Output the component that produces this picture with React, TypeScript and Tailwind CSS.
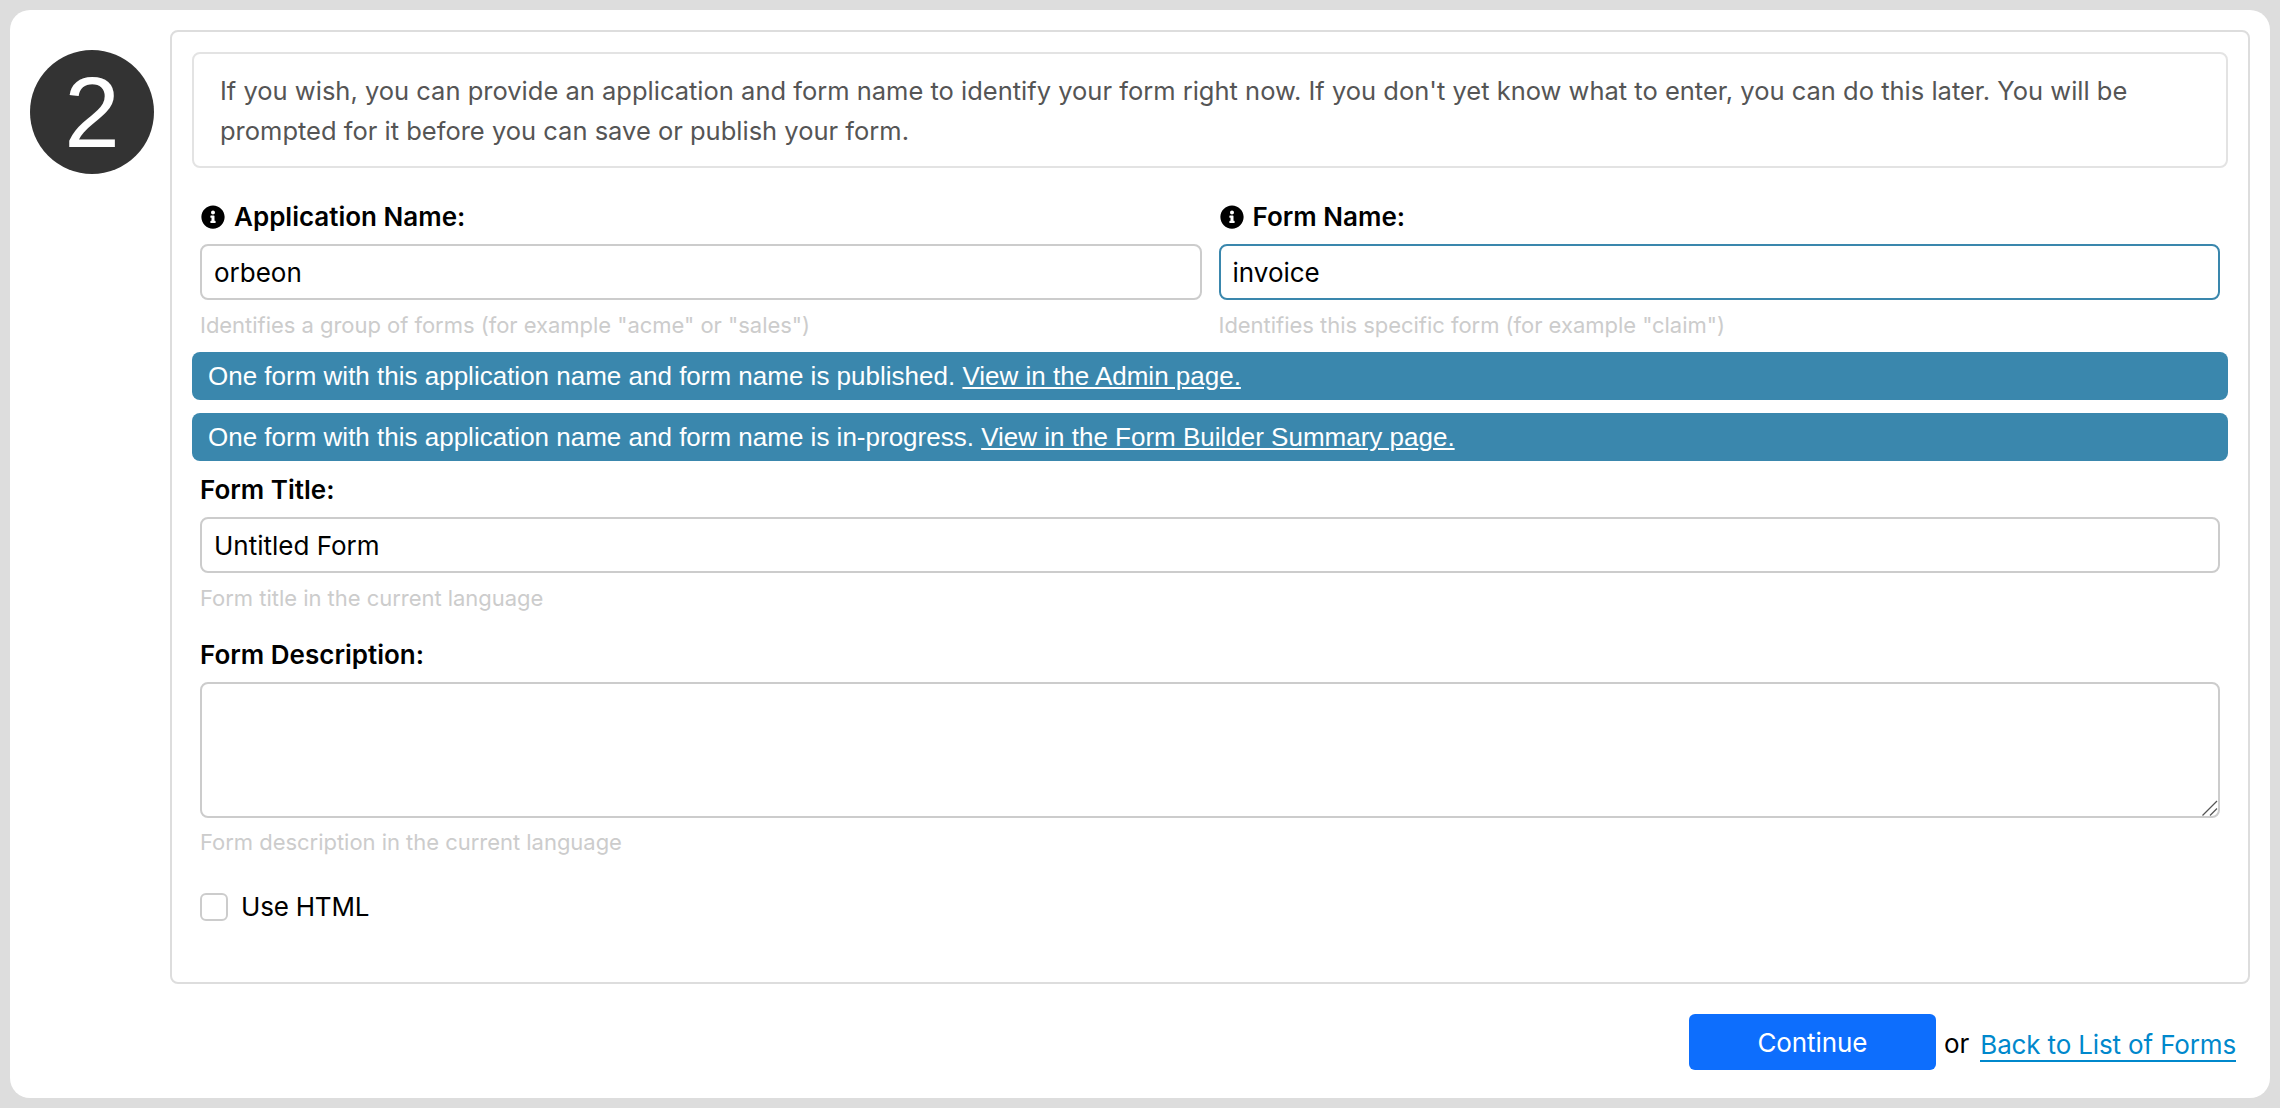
import { FaInfoCircle } from "react-icons/fa";

const sans = "font-['Inter','Noto_Sans',sans-serif]";

function Hint({ children, className = "mt-[13px]" }: { children: React.ReactNode; className?: string }) {
  return <div className={`${className} h-[24px] text-[22px] leading-[24px] tracking-[-0.03px] text-[#cccccc]`}>{children}</div>;
}

function Label({ children, info }: { children: React.ReactNode; info?: boolean }) {
  return (
    <label className="flex h-[28px] items-center gap-[8px] text-[26px] font-semibold leading-[28px] text-black">
      {info && <FaInfoCircle className="ml-[1px] mr-[1px] h-[24px] w-[24px] text-black" />}
      {children}
    </label>
  );
}

function Field({ label, value, hint, info, focused }: { label: string; value: string; hint: string; info?: boolean; focused?: boolean }) {
  return (
    <div className="flex-1">
      <Label info={info}>{label}</Label>
      <input
        readOnly
        value={value}
        className={`mt-[13px] block h-[56px] w-full rounded-[8px] border-2 bg-white px-[12px] text-[26px] text-black outline-none ${focused ? "border-[#3a87ad]" : "border-[#cccccc]"}`}
      />
      <Hint>{hint}</Hint>
    </div>
  );
}

function Alert({ text, link }: { text: string; link: string }) {
  return (
    <div className="flex h-[48px] items-center rounded-[8px] bg-[#3a87ad] px-[16px] font-['Liberation_Sans',sans-serif] text-[26px] leading-[48px] text-white">
      <span className="whitespace-pre">{text} </span>
      <a className="underline">{link}</a>
    </div>
  );
}

export default function App() {
  return (
    <div className={`h-[1108px] w-[2280px] overflow-hidden bg-[#dddddd] p-[10px] ${sans}`}>
      <div className="h-[1088px] rounded-[20px] bg-white pl-[20px] pr-[20px] pt-[20px]">
        <div className="flex items-start">
          <div className="mt-[20px] flex h-[124px] w-[124px] shrink-0 items-center justify-center rounded-full bg-[#333333] font-['Liberation_Sans',sans-serif] text-[100px] leading-none text-white">
            2
          </div>
          <div className="ml-[16px] h-[954px] flex-1 rounded-[8px] border-2 border-[#dddddd] px-[20px] pt-[20px]">
            <div className="h-[116px] rounded-[8px] border-2 border-[#e3e3e3] pl-[26px] pr-[60px] pt-[17px] text-[25.5px] leading-[40px] text-[#555555]">
              If you wish, you can provide an application and form name to identify your form right now. If you don't yet know what to enter, you can do this later. You will be prompted for it before you can save or publish your form.
            </div>
            <div className="mt-[35px] flex gap-[17px] px-[8px]">
              <Field info label="Application Name:" value="orbeon" hint={'Identifies a group of forms (for example "acme" or "sales")'} />
              <Field info focused label="Form Name:" value="invoice" hint={'Identifies this specific form (for example "claim")'} />
            </div>
            <div className="mt-[15px] flex flex-col gap-[13px]">
              <Alert text="One form with this application name and form name is published." link="View in the Admin page." />
              <Alert text="One form with this application name and form name is in-progress." link="View in the Form Builder Summary page." />
            </div>
            <div className="mt-[15px] px-[8px]">
              <Field label="Form Title:" value="Untitled Form" hint="Form title in the current language" />
              <div className="mt-[31px]">
                <Label>Form Description:</Label>
                <div className="relative mt-[13px]">
                  <textarea
                    readOnly
                    className="block h-[136px] w-full resize-none rounded-[8px] border-2 border-[#cccccc] bg-white outline-none"
                  />
                  <svg className="absolute bottom-[2px] right-[2px] h-[16px] w-[16px]" viewBox="0 0 16 16" fill="none" stroke="#555555" strokeWidth="1.2">
                    <path d="M0.5 15.5L15 1" />
                    <path d="M8 15.5L15 8.5" />
                  </svg>
                </div>
                <Hint className="mt-[12px]">Form description in the current language</Hint>
              </div>
              <div className="mt-[38px] flex items-center gap-[13px]">
                <span className="h-[28px] w-[28px] rounded-[6px] border-2 border-[#cccccc] bg-white" />
                <span className="text-[26px] leading-[30px] tracking-[-0.2px] text-black">Use HTML</span>
              </div>
            </div>
          </div>
        </div>
        <div className="mt-[30px] flex items-center justify-end pr-[14px]">
          <button className="h-[56px] w-[247px] rounded-[6px] bg-[#0d6efd] text-[26px] tracking-[-0.1px] text-white">Continue</button>
          <span className="ml-[8px] mt-[2px] text-[26px] text-black">or</span>
          <a className="ml-[11px] mt-[8px] border-b-2 border-[#0088cc] text-[26px] leading-[30px] tracking-[-0.15px] text-[#0088cc]">Back to List of Forms</a>
        </div>
      </div>
    </div>
  );
}
